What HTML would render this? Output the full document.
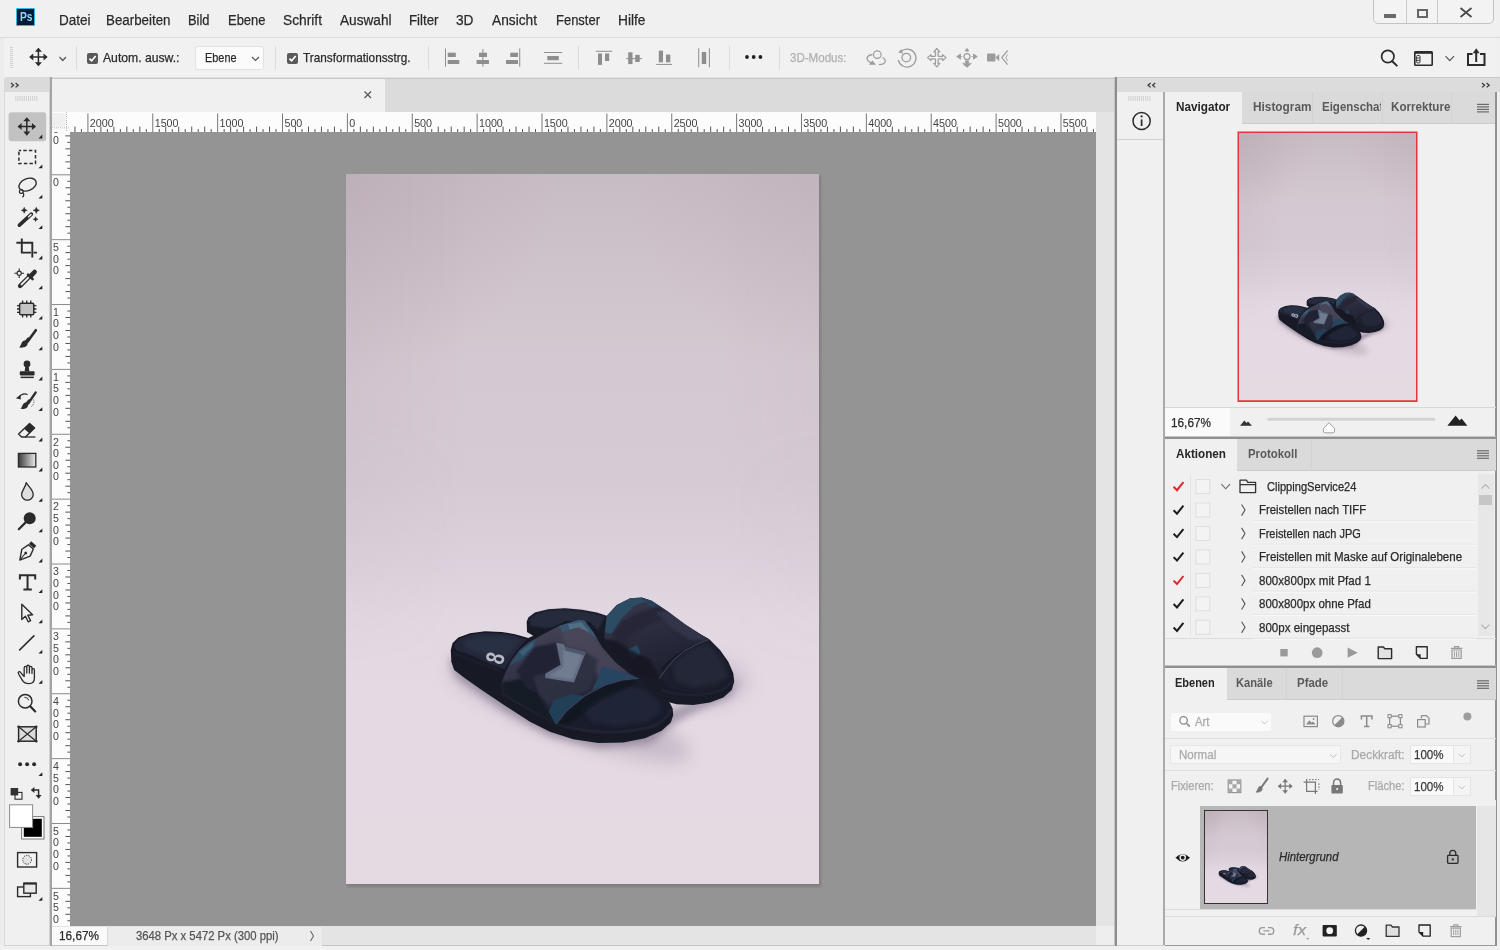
<!DOCTYPE html>
<html lang="de"><head><meta charset="utf-8"><title>Photoshop</title>
<style>
html,body{margin:0;padding:0}
body{width:1500px;height:950px;position:relative;overflow:hidden;background:#f0f0f0;font-family:"Liberation Sans",sans-serif;}
.b{position:absolute;display:block;box-sizing:border-box}
.t{position:absolute;white-space:nowrap;line-height:20px;display:block;transform-origin:0 50%;-webkit-text-stroke:0.25px currentColor}
svg{overflow:visible}
</style></head><body>
<div id="app" style="position:absolute;left:0;top:0;width:1500px;height:950px;will-change:transform">
<div class="b" style="left:0px;top:0px;width:1500px;height:37px;background:#f0f0f0;"></div>
<div class="b" style="left:0px;top:37px;width:1500px;height:1px;background:#dadada;"></div>
<div class="b" style="left:4px;top:38px;width:1494px;height:40px;background:#f1f1f1;"></div>
<div class="b" style="left:49px;top:77px;width:1068px;height:1px;background:#e2e2e2;"></div>
<div class="b" style="left:49px;top:78px;width:1068px;height:1px;background:#c6c6c6;"></div>
<div class="b" style="left:4px;top:79px;width:1px;height:871px;background:#d9d9d9;"></div>
<div class="b" style="left:4.5px;top:77px;width:45px;height:15px;background:#dadada;"></div>
<div class="b" style="left:5px;top:92px;width:45px;height:858px;background:#f0f0f0;"></div>
<div class="b" style="left:49px;top:77px;width:1px;height:873px;background:#d2d2d2;"></div>
<div class="b" style="left:50px;top:77px;width:2px;height:873px;background:#a4a4a4;"></div>
<div class="b" style="left:52px;top:79px;width:1064px;height:33px;background:#dbdbdb;"></div>
<div class="b" style="left:52px;top:79px;width:333px;height:33px;background:#f0f0f0;"></div>
<div class="b" style="left:52px;top:112px;width:1044px;height:20px;background:#fcfcfc;"></div>
<div class="b" style="left:52px;top:132px;width:18px;height:794px;background:#fcfcfc;"></div>
<div class="b" style="left:70px;top:132px;width:1026px;height:794px;background:#949494;"></div>
<div class="b" style="left:1096px;top:112px;width:20px;height:814px;background:#e4e4e4;"></div>
<div class="b" style="left:52px;top:926px;width:1064px;height:20px;background:#e4e4e4;"></div>
<div class="b" style="left:1096px;top:926px;width:20px;height:20px;background:#eeeeee;"></div>
<div class="b" style="left:0px;top:946px;width:1500px;height:4px;background:#f0f0f0;"></div>
<div class="b" style="left:52px;top:945.4px;width:1064px;height:1px;background:#c4c4c4;"></div>
<div class="b" style="left:0px;top:945px;width:50px;height:5px;background:#f0f0f0;"></div>
<div class="b" style="left:4px;top:945px;width:46px;height:1px;background:#d2d2d2;"></div>
<div class="b" style="left:0px;top:38px;width:3.5px;height:907px;background:#ececec;"></div>
<div class="b" style="left:1114px;top:77px;width:1px;height:869px;background:#c4c4c4;"></div>
<div class="b" style="left:1115px;top:77px;width:1.6px;height:869px;background:#8c8c8c;"></div>
<div class="b" style="left:1116.6px;top:77px;width:383.4px;height:1px;background:#c8c8c8;"></div>
<div class="b" style="left:1116.6px;top:78px;width:383.4px;height:14px;background:#dcdcdc;"></div>
<div class="b" style="left:1117px;top:92px;width:47px;height:47px;background:#f0f0f0;"></div>
<div class="b" style="left:1117px;top:139px;width:47px;height:1px;background:#cfcfcf;"></div>
<div class="b" style="left:1117px;top:140px;width:47px;height:806px;background:#f0f0f0;"></div>
<div class="b" style="left:1163px;top:92px;width:2px;height:854px;background:#aaaaaa;"></div>
<div class="b" style="left:1165px;top:92px;width:331px;height:854px;background:#f0f0f0;"></div>
<div class="b" style="left:16px;top:8px;width:19px;height:18px;background:#001d34;border:1.5px solid #2fb5ee;border-radius:1px;"></div>
<span id="pslogo" class="t" style="left:19.5px;top:6.60px;font-size:12px;color:#8fd4ff;font-weight:700;-webkit-text-stroke:0;transform:scaleX(0.8510);">Ps</span>
<span id="menu0" class="t" style="left:59px;top:9.80px;font-size:15.3px;color:#2a2a2a;transform:scaleX(0.8819);">Datei</span>
<span id="menu1" class="t" style="left:106px;top:9.80px;font-size:15.3px;color:#2a2a2a;transform:scaleX(0.8716);">Bearbeiten</span>
<span id="menu2" class="t" style="left:188px;top:9.80px;font-size:15.3px;color:#2a2a2a;transform:scaleX(0.8426);">Bild</span>
<span id="menu3" class="t" style="left:227.5px;top:9.80px;font-size:15.3px;color:#2a2a2a;transform:scaleX(0.8477);">Ebene</span>
<span id="menu4" class="t" style="left:282.5px;top:9.80px;font-size:15.3px;color:#2a2a2a;transform:scaleX(0.8994);">Schrift</span>
<span id="menu5" class="t" style="left:339.5px;top:9.80px;font-size:15.3px;color:#2a2a2a;transform:scaleX(0.8905);">Auswahl</span>
<span id="menu6" class="t" style="left:409px;top:9.80px;font-size:15.3px;color:#2a2a2a;transform:scaleX(0.8677);">Filter</span>
<span id="menu7" class="t" style="left:456px;top:9.80px;font-size:15.3px;color:#2a2a2a;transform:scaleX(0.8945);">3D</span>
<span id="menu8" class="t" style="left:491.5px;top:9.80px;font-size:15.3px;color:#2a2a2a;transform:scaleX(0.8969);">Ansicht</span>
<span id="menu9" class="t" style="left:556px;top:9.80px;font-size:15.3px;color:#2a2a2a;transform:scaleX(0.8485);">Fenster</span>
<span id="menu10" class="t" style="left:618px;top:9.80px;font-size:15.3px;color:#2a2a2a;transform:scaleX(0.8984);">Hilfe</span>
<div class="b" style="left:1373px;top:-2px;width:121px;height:26px;border:1px solid #c4c4c4;border-radius:0 0 5px 5px;background:#f3f3f3"></div>
<div class="b" style="left:1406px;top:0px;width:1px;height:23px;background:#c8c8c8;"></div>
<div class="b" style="left:1437px;top:0px;width:1px;height:23px;background:#c8c8c8;"></div>
<div class="b" style="left:1384px;top:14px;width:12px;height:4px;background:#6a6a6a;"></div>
<div class="b" style="left:1417px;top:9px;width:11px;height:9px;border:2px solid #666;border-top-width:2px"></div>
<svg class="b" style="left:1459px;top:7px;" width="14" height="11" viewBox="0 0 14 11"><path d="M1.5 1 L12.5 10 M12.5 1 L1.5 10" stroke="#4a4a4a" stroke-width="1.8" fill="none"/></svg>
<div class="b" style="left:10px;top:47px;width:3px;height:1px;background:#cfcfcf;"></div>
<div class="b" style="left:10px;top:49px;width:3px;height:1px;background:#cfcfcf;"></div>
<div class="b" style="left:10px;top:51px;width:3px;height:1px;background:#cfcfcf;"></div>
<div class="b" style="left:10px;top:53px;width:3px;height:1px;background:#cfcfcf;"></div>
<div class="b" style="left:10px;top:55px;width:3px;height:1px;background:#cfcfcf;"></div>
<div class="b" style="left:10px;top:57px;width:3px;height:1px;background:#cfcfcf;"></div>
<div class="b" style="left:10px;top:59px;width:3px;height:1px;background:#cfcfcf;"></div>
<div class="b" style="left:10px;top:61px;width:3px;height:1px;background:#cfcfcf;"></div>
<div class="b" style="left:10px;top:63px;width:3px;height:1px;background:#cfcfcf;"></div>
<div class="b" style="left:10px;top:65px;width:3px;height:1px;background:#cfcfcf;"></div>
<div class="b" style="left:10px;top:67px;width:3px;height:1px;background:#cfcfcf;"></div>
<svg class="b" style="left:0px;top:0px;pointer-events:none" width="1500" height="950" viewBox="0 0 1500 950"><g transform="translate(38.4 57)"><path d="M-8.25 0 H8.25 M0 -8.25 V8.25" stroke="#2b2b2b" stroke-width="1.5" fill="none"/><path d="M0 -9.25 L3.515 -5.135 H-3.515 Z M0 9.25 L3.515 5.135 H-3.515 Z M-9.25 0 L-5.135 -3.515 V3.515 Z M9.25 0 L5.135 -3.515 V3.515 Z" fill="#2b2b2b"/></g></svg>
<svg class="b" style="left:0px;top:0px;pointer-events:none" width="1500" height="950" viewBox="0 0 1500 950"><path d="M59.5 57 l3.25 3.5 l3.25 -3.5" stroke="#555" stroke-width="1.2" fill="none"/></svg>
<div class="b" style="left:76px;top:46px;width:1px;height:24px;background:#dcdcdc;"></div>
<div class="b" style="left:274.5px;top:46px;width:1px;height:24px;background:#dcdcdc;"></div>
<div class="b" style="left:428px;top:46px;width:1px;height:24px;background:#dcdcdc;"></div>
<div class="b" style="left:578px;top:46px;width:1px;height:24px;background:#dcdcdc;"></div>
<div class="b" style="left:729px;top:46px;width:1px;height:24px;background:#dcdcdc;"></div>
<div class="b" style="left:779px;top:46px;width:1px;height:24px;background:#dcdcdc;"></div>
<svg class="b" style="left:86.5px;top:52.5px" width="11" height="11" viewBox="0 0 11 11"><rect x="0" y="0" width="11" height="11" rx="2" fill="#5a5a5a"/><path d="M2.4 5.6 L4.6 7.8 L8.7 3" stroke="#fff" stroke-width="1.7" fill="none"/></svg>
<span id="opt1" class="t" style="left:102.5px;top:48.10px;font-size:13px;color:#2a2a2a;transform:scaleX(0.9368);">Autom. ausw.:</span>
<div class="b" style="left:195px;top:46px;width:69px;height:24px;background:#fbfbfb;border:1px solid #e2e2e2;border-radius:3px"></div>
<span id="opt2" class="t" style="left:205px;top:48.40px;font-size:13px;color:#2a2a2a;transform:scaleX(0.8379);">Ebene</span>
<svg class="b" style="left:0px;top:0px;pointer-events:none" width="1500" height="950" viewBox="0 0 1500 950"><path d="M252 57 l3.5 3.5 l3.5 -3.5" stroke="#555" stroke-width="1.2" fill="none"/></svg>
<svg class="b" style="left:286.5px;top:52.5px" width="11" height="11" viewBox="0 0 11 11"><rect x="0" y="0" width="11" height="11" rx="2" fill="#5a5a5a"/><path d="M2.4 5.6 L4.6 7.8 L8.7 3" stroke="#fff" stroke-width="1.7" fill="none"/></svg>
<span id="opt3" class="t" style="left:303px;top:48.10px;font-size:13px;color:#2a2a2a;transform:scaleX(0.9054);">Transformationsstrg.</span>
<span id="opt4" class="t" style="left:790px;top:48.10px;font-size:13px;color:#b0b0b0;transform:scaleX(0.8886);">3D-Modus:</span>
<svg class="b" style="left:744px;top:54px;" width="20" height="6" viewBox="0 0 20 6"><circle cx="3" cy="3" r="1.9" fill="#222"/><circle cx="9.7" cy="3" r="1.9" fill="#222"/><circle cx="16.4" cy="3" r="1.9" fill="#222"/></svg>
<svg class="b" style="left:0px;top:0px;pointer-events:none" width="1500" height="950" viewBox="0 0 1500 950"><rect x="445" y="48.5" width="1.00" height="18.20" fill="#8e8e8e"/><rect x="447.7" y="52.7" width="8.10" height="4.30" fill="#8e8e8e"/><rect x="447.7" y="60" width="11.60" height="4.00" fill="#8e8e8e"/><rect x="482.4" y="49" width="1.00" height="17.70" fill="#8e8e8e"/><rect x="479" y="52.7" width="8.00" height="4.30" fill="#8e8e8e"/><rect x="476.6" y="60" width="12.40" height="4.00" fill="#8e8e8e"/><rect x="519.2" y="48.5" width="1.00" height="18.20" fill="#8e8e8e"/><rect x="510.2" y="52.7" width="7.80" height="4.30" fill="#8e8e8e"/><rect x="506" y="60" width="12.00" height="4.00" fill="#8e8e8e"/><rect x="544" y="52" width="18.20" height="1.00" fill="#8e8e8e"/><rect x="544" y="62.8" width="18.20" height="1.00" fill="#8e8e8e"/><rect x="547.3" y="56" width="11.50" height="4.20" fill="#8e8e8e"/><rect x="595.8" y="50.8" width="16.30" height="1.00" fill="#8e8e8e"/><rect x="598" y="53.5" width="4.00" height="11.40" fill="#8e8e8e"/><rect x="605" y="53.5" width="4.20" height="7.50" fill="#8e8e8e"/><rect x="626" y="58.1" width="16.00" height="1.00" fill="#8e8e8e"/><rect x="628.2" y="52.3" width="4.30" height="11.80" fill="#8e8e8e"/><rect x="635.2" y="54.9" width="4.50" height="7.10" fill="#8e8e8e"/><rect x="656.2" y="63.9" width="15.80" height="1.00" fill="#8e8e8e"/><rect x="658.8" y="50.7" width="4.20" height="11.60" fill="#8e8e8e"/><rect x="666" y="54.6" width="4.30" height="7.70" fill="#8e8e8e"/><rect x="698.2" y="48.3" width="1.00" height="18.90" fill="#8e8e8e"/><rect x="708.9" y="48.3" width="1.00" height="18.90" fill="#8e8e8e"/><rect x="701.8" y="52" width="4.40" height="12.00" fill="#8e8e8e"/></svg>
<svg class="b" style="left:0px;top:0px;pointer-events:none" width="1500" height="950" viewBox="0 0 1500 950"><circle cx="877.3" cy="54.6" r="3.8" fill="none" stroke="#9c9c9c" stroke-width="1.2"/><path d="M872.5 54.5 C866 55.5 865 60 871 62.8 M879 64.6 C886 64.5 887 60 882.5 57.5" fill="none" stroke="#9c9c9c" stroke-width="1.3"/><path d="M868.8 64.8 L876 64.8 L872.4 60.6 Z" fill="#9c9c9c"/><path d="M900.8 51.5 A9 9 0 1 1 898.2 60" fill="none" stroke="#9c9c9c" stroke-width="1.3"/><circle cx="906.3" cy="57.6" r="4.3" fill="none" stroke="#9c9c9c" stroke-width="1.3"/><path d="M898.2 52.6 L903.2 53.6 L901.2 49.2 Z" fill="#9c9c9c"/><path transform="rotate(0 936.8 57.6)" d="M935.5 56.300000000000004 V51.800000000000004 H933.8 L936.8 48.400000000000006 L939.8 51.800000000000004 H938.0999999999999 V56.300000000000004" fill="none" stroke="#9c9c9c" stroke-width="1.2" stroke-linejoin="round"/><path transform="rotate(90 936.8 57.6)" d="M935.5 56.300000000000004 V51.800000000000004 H933.8 L936.8 48.400000000000006 L939.8 51.800000000000004 H938.0999999999999 V56.300000000000004" fill="none" stroke="#9c9c9c" stroke-width="1.2" stroke-linejoin="round"/><path transform="rotate(180 936.8 57.6)" d="M935.5 56.300000000000004 V51.800000000000004 H933.8 L936.8 48.400000000000006 L939.8 51.800000000000004 H938.0999999999999 V56.300000000000004" fill="none" stroke="#9c9c9c" stroke-width="1.2" stroke-linejoin="round"/><path transform="rotate(270 936.8 57.6)" d="M935.5 56.300000000000004 V51.800000000000004 H933.8 L936.8 48.400000000000006 L939.8 51.800000000000004 H938.0999999999999 V56.300000000000004" fill="none" stroke="#9c9c9c" stroke-width="1.2" stroke-linejoin="round"/><circle cx="967" cy="56.6" r="3" fill="none" stroke="#9c9c9c" stroke-width="1.2"/><path d="M962.5 56.6 h-2 v-2.6 l-3.8 2.6 l3.8 2.6 v-2.6 M971.5 56.6 h2 v-2.6 l3.8 2.6 l-3.8 2.6 v-2.6" fill="#9c9c9c" stroke="#9c9c9c" stroke-width="0.8"/><path d="M967 52.1 v-1 h-2 l2 -2.8 l2 2.8 h-2 M965.4 60.800000000000004 h3.2 v2.6 h2.8 l-4.4 4 l-4.4 -4 h2.8 Z" fill="#9c9c9c" stroke="#9c9c9c" stroke-width="0.6"/><rect x="987" y="53.6" width="8.4" height="8" rx="1" fill="#9c9c9c"/><path d="M995.4 57.6 L999.2 54 V61.2 Z" fill="#9c9c9c"/><path d="M1007.6 50.5 L1001.8 57.6 L1007.6 64.7" fill="none" stroke="#9c9c9c" stroke-width="1.2"/><path d="M1007.4 54.5 Q1004.5 57.6 1007.4 60.8" fill="none" stroke="#9c9c9c" stroke-width="0.9"/></svg>
<svg class="b" style="left:0px;top:0px;pointer-events:none" width="1500" height="950" viewBox="0 0 1500 950"><circle cx="1387.8" cy="56.5" r="6.2" fill="none" stroke="#2b2b2b" stroke-width="1.7"/><path d="M1392.2 61.2 L1396.8 65.6" stroke="#2b2b2b" stroke-width="2" stroke-linecap="round"/><rect x="1414.8" y="51.8" width="17.4" height="13.4" rx="0.8" fill="none" stroke="#2b2b2b" stroke-width="1.6"/><path d="M1414.8 52.6 H1432.2" stroke="#2b2b2b" stroke-width="2.4"/><rect x="1416.6" y="55.5" width="3.4" height="7.4" rx="1" fill="none" stroke="#2b2b2b" stroke-width="0.9"/><path d="M1416.6 58 h3.4 M1416.6 60.4 h3.4" stroke="#2b2b2b" stroke-width="0.8"/><path d="M1445.5 56.2 l4.25 4.4 l4.25 -4.4" stroke="#555" stroke-width="1.2" fill="none"/><path d="M1472.5 54 H1468 V65 H1484.5 V54 H1480" fill="none" stroke="#2b2b2b" stroke-width="2"/><path d="M1476.2 62 V50.5" stroke="#2b2b2b" stroke-width="2"/><path d="M1472.8 53.2 L1476.2 48.2 L1479.6 53.2 Z" fill="#2b2b2b"/></svg>
<svg class="b" style="left:0px;top:0px;pointer-events:none" width="1500" height="950" viewBox="0 0 1500 950"><path d="M11 83 l2.6 2.2 l-2.6 2.2 M15.6 83 l2.6 2.2 l-2.6 2.2" fill="none" stroke="#333" stroke-width="1.2"/><rect x="15.4" y="96" width="0.9" height="5" fill="#cdcdcd"/><rect x="17.5" y="96" width="0.9" height="5" fill="#cdcdcd"/><rect x="19.6" y="96" width="0.9" height="5" fill="#cdcdcd"/><rect x="21.7" y="96" width="0.9" height="5" fill="#cdcdcd"/><rect x="23.8" y="96" width="0.9" height="5" fill="#cdcdcd"/><rect x="25.9" y="96" width="0.9" height="5" fill="#cdcdcd"/><rect x="28.0" y="96" width="0.9" height="5" fill="#cdcdcd"/><rect x="30.1" y="96" width="0.9" height="5" fill="#cdcdcd"/><rect x="32.2" y="96" width="0.9" height="5" fill="#cdcdcd"/><rect x="34.3" y="96" width="0.9" height="5" fill="#cdcdcd"/><rect x="36.4" y="96" width="0.9" height="5" fill="#cdcdcd"/><rect x="8.6" y="112.2" width="37.6" height="29" rx="3" fill="#c2c2c2"/><g transform="translate(26.8 126.4)"><path d="M-8.25 0 H8.25 M0 -8.25 V8.25" stroke="#2b2b2b" stroke-width="1.5" fill="none"/><path d="M0 -9.25 L3.515 -5.135 H-3.515 Z M0 9.25 L3.515 5.135 H-3.515 Z M-9.25 0 L-5.135 -3.515 V3.515 Z M9.25 0 L5.135 -3.515 V3.515 Z" fill="#2b2b2b"/></g><path d="M42.3 134.6 V138.4 H38.5 Z" fill="#222"/><rect x="18.9" y="150.4" width="16.6" height="13.2" fill="none" stroke="#2b2b2b" stroke-width="1.5" stroke-dasharray="3.4 2.2" stroke-dashoffset="1.2"/><path d="M42.3 164.5 V168.3 H38.5 Z" fill="#222"/><ellipse cx="27.6" cy="184.6" rx="9" ry="6" transform="rotate(-22 27.6 184.6)" fill="none" stroke="#2b2b2b" stroke-width="1.4"/><circle cx="21.3" cy="191.4" r="1.9" fill="none" stroke="#2b2b2b" stroke-width="1.2"/><path d="M22.8 192.6 Q24.8 194.6 22.6 197.4" fill="none" stroke="#2b2b2b" stroke-width="1.2"/><path d="M42.3 194.8 V198.60000000000002 H38.5 Z" fill="#222"/><path d="M19.4 225.2 L31.4 214.2" stroke="#2b2b2b" stroke-width="3.6" stroke-linecap="round"/><path d="M28.6 216.8 L31 214.6" stroke="#f0f0f0" stroke-width="1.5" stroke-linecap="round"/><path d="M24.2 207.3 L25.10 209.40 L27.2 210.3 L25.10 211.20 L24.2 213.3 L23.30 211.20 L21.2 210.3 L23.30 209.40 Z" fill="#2b2b2b" stroke="#2b2b2b" stroke-width="0.5" stroke-linejoin="round"/><path d="M36.3 207.20000000000002 L37.23 209.37 L39.4 210.3 L37.23 211.23 L36.3 213.4 L35.37 211.23 L33.199999999999996 210.3 L35.37 209.37 Z" fill="#2b2b2b" stroke="#2b2b2b" stroke-width="0.5" stroke-linejoin="round"/><path d="M35.6 216.79999999999998 L36.32 218.48 L38.0 219.2 L36.32 219.92 L35.6 221.6 L34.88 219.92 L33.2 219.2 L34.88 218.48 Z" fill="#2b2b2b" stroke="#2b2b2b" stroke-width="0.5" stroke-linejoin="round"/><path d="M42.3 225.2 V229.0 H38.5 Z" fill="#222"/><path d="M21.8 238.6 V252.6 H31 M33.6 252.6 H37 M16.4 242.8 H32.3 V257.4" fill="none" stroke="#2b2b2b" stroke-width="1.9"/><path d="M42.3 255.6 V259.4 H38.5 Z" fill="#222"/><path d="M29 277 L21.4 284.6 Q19.4 286.6 20.4 285.6" stroke="#2b2b2b" stroke-width="4.4" stroke-linecap="round"/><path d="M28.6 277.4 L21.6 284.4" stroke="#f0f0f0" stroke-width="2" stroke-linecap="round"/><path d="M28 274.6 L32.6 279.2" stroke="#2b2b2b" stroke-width="2.6" stroke-linecap="round"/><path d="M30.6 276.2 L34.6 272" stroke="#2b2b2b" stroke-width="4.6" stroke-linecap="round"/><circle cx="19.2" cy="273.2" r="2.1" fill="none" stroke="#2b2b2b" stroke-width="1.1"/><path d="M19.2 268.4 v2.7 M19.2 275.3 v2.7 M14.4 273.2 h2.7 M21.3 273.2 h2.7" stroke="#2b2b2b" stroke-width="1.1"/><path d="M42.3 285.4 V289.2 H38.5 Z" fill="#222"/><rect x="19.6" y="303.2" width="14.2" height="11.6" rx="1.6" fill="#c4c4c4" stroke="#2b2b2b" stroke-width="1.5"/><path d="M22.6 300.4 v2.6 M22.6 315 v2.6 M26.7 300.4 v2.6 M26.7 315 v2.6 M30.8 300.4 v2.6 M30.8 315 v2.6 M17 305.6 h2.6 M33.8 305.6 h2.6 M17 309 h2.6 M33.8 309 h2.6 M17 312.4 h2.6 M33.8 312.4 h2.6 " stroke="#2b2b2b" stroke-width="1.3"/><path d="M42.3 315.8 V319.6 H38.5 Z" fill="#222"/><path d="M35.8 330.2 L27.6 341.4" stroke="#2b2b2b" stroke-width="2.6" stroke-linecap="round"/><path d="M28.6 339 L25 343.4" stroke="#2b2b2b" stroke-width="3.4" stroke-linecap="round"/><path d="M25 340.6 C21.6 340.4 21.6 345 19.2 347.6 C24 348.2 28 346.6 27.6 342.8 Z" fill="#2b2b2b"/><path d="M42.3 346.4 V350.2 H38.5 Z" fill="#222"/><circle cx="27" cy="364" r="3.4" fill="#2b2b2b"/><path d="M25.4 366 L24.6 371.6 H29.4 L28.6 366 Z" fill="#2b2b2b"/><rect x="19.8" y="371.2" width="14.8" height="4.2" rx="0.8" fill="#2b2b2b"/><rect x="20.6" y="376.6" width="13.2" height="1.5" fill="#2b2b2b"/><path d="M42.3 376.6 V380.40000000000003 H38.5 Z" fill="#222"/><path d="M35.6 392.6 L28.4 403.2" stroke="#2b2b2b" stroke-width="2.4" stroke-linecap="round"/><path d="M29.2 401 L26 405" stroke="#2b2b2b" stroke-width="3.2" stroke-linecap="round"/><path d="M25.8 402.4 C22.6 402.4 22.8 406.4 20.4 408.8 C24.6 409.4 28.4 408 28 404.4 Z" fill="#2b2b2b"/><path d="M18.6 397.4 Q22.6 392.4 27.6 394.6" fill="none" stroke="#2b2b2b" stroke-width="1.1"/><path d="M15.8 398.2 L20.6 395 L20.8 399.4 Z" fill="#2b2b2b"/><path d="M33.6 399.6 Q35 403.6 30.6 407.4" fill="none" stroke="#2b2b2b" stroke-width="0.9" stroke-dasharray="1 1.2"/><path d="M42.3 407.2 V411.0 H38.5 Z" fill="#222"/><path d="M29.6 423.6 L34.6 428 L25.4 437 H21.6 L18.6 434 Z" fill="#f0f0f0" stroke="#2b2b2b" stroke-width="1.4" stroke-linejoin="round"/><path d="M29.6 423.6 L34.6 428 L29.2 433.2 L24.2 428.8 Z" fill="#2b2b2b"/><path d="M25 437 H35.4" stroke="#2b2b2b" stroke-width="1.3"/><path d="M42.3 437.6 V441.40000000000003 H38.5 Z" fill="#222"/><defs><linearGradient id="tg" x1="0" x2="1"><stop offset="0" stop-color="#3a3a3a"/><stop offset="1" stop-color="#ececec"/></linearGradient></defs><rect x="18.4" y="453.4" width="17.4" height="13.6" fill="url(#tg)" stroke="#2b2b2b" stroke-width="1.3"/><path d="M42.3 467.6 V471.40000000000003 H38.5 Z" fill="#222"/><path d="M26.2 482.6 C28.4 486.6 33.2 490 33.2 494.4 A5.8 5.8 0 0 1 21.6 494.4 C21.6 490.6 25.6 487.4 26.2 482.6 Z" fill="#dedede" stroke="#2b2b2b" stroke-width="1.3" stroke-linejoin="round"/><path d="M42.3 498 V501.8 H38.5 Z" fill="#222"/><circle cx="29.7" cy="518.2" r="6" fill="#2b2b2b"/><path d="M25.4 522.6 L18.8 529.2" stroke="#2b2b2b" stroke-width="2.2" stroke-linecap="round"/><path d="M42.3 528.4 V532.1999999999999 H38.5 Z" fill="#222"/><g transform="rotate(40 27.4 551)"><path d="M24 541.2 h6.8 v3.4 h-6.8 Z" fill="#2b2b2b"/><path d="M24.2 545.6 h6.4 l2.2 7.6 l-5.4 9.6 l-5.4 -9.6 Z" fill="#f0f0f0" stroke="#2b2b2b" stroke-width="1.4" stroke-linejoin="round"/><path d="M27.4 562 V554.6" stroke="#2b2b2b" stroke-width="1.1"/><circle cx="27.4" cy="553.6" r="1.4" fill="#2b2b2b"/></g><path d="M42.3 558.6 V562.4 H38.5 Z" fill="#222"/><path d="M19.9 579.6 V575.2 H35.2 V579.6 M27.55 575.2 V589.4 M23.4 589.4 H31.8" fill="none" stroke="#2b2b2b" stroke-width="2"/><path d="M42.3 589.2 V593.0 H38.5 Z" fill="#222"/><path d="M21.8 604.2 V619.6 L25.4 616.2 L28.2 621.8 L30.6 620.6 L27.8 615.2 L32.6 614.8 Z" fill="#f0f0f0" stroke="#2b2b2b" stroke-width="1.4" stroke-linejoin="round"/><path d="M42.3 619.4 V623.1999999999999 H38.5 Z" fill="#222"/><path d="M19.2 650.4 L34.4 635.4" stroke="#2b2b2b" stroke-width="1.5"/><path d="M42.3 649.8 V653.5999999999999 H38.5 Z" fill="#222"/><path d="M23.6 676 L20.6 672.4 C19.4 670.8 17.4 672 18.6 674 L22.4 680.4 C24 683 26 683.6 29 683.6 C32.4 683.6 34.4 681.4 34.4 678 V670 C34.4 668.2 32 668.2 32 670 V673.4 V667.8 C32 666 29.4 666 29.4 667.8 V673 V666.6 C29.4 664.8 26.8 664.8 26.8 666.6 V673 V667.8 C26.8 666 24.2 666 24.2 667.8 V676.6" fill="#f0f0f0" stroke="#2b2b2b" stroke-width="1.3" stroke-linejoin="round" stroke-linecap="round"/><path d="M42.3 680 V683.8 H38.5 Z" fill="#222"/><circle cx="25.2" cy="701.2" r="6.8" fill="none" stroke="#2b2b2b" stroke-width="1.5"/><path d="M30.2 706.2 L35.2 711.4" stroke="#2b2b2b" stroke-width="2.2" stroke-linecap="round"/><path d="M24.4 697.4 A4 4 0 0 1 28.8 700.4" fill="none" stroke="#2b2b2b" stroke-width="0.9"/><rect x="18.6" y="726.8" width="17.6" height="14.4" fill="#dcdcdc" stroke="#2b2b2b" stroke-width="1.5"/><path d="M18.6 726.8 L36.2 741.2 M36.2 726.8 L18.6 741.2" stroke="#2b2b2b" stroke-width="1.2"/><circle cx="18.6" cy="726.8" r="1.3" fill="#2b2b2b"/><circle cx="36.2" cy="726.8" r="1.3" fill="#2b2b2b"/><circle cx="18.6" cy="741.2" r="1.3" fill="#2b2b2b"/><circle cx="36.2" cy="741.2" r="1.3" fill="#2b2b2b"/><circle cx="20.1" cy="764.2" r="2" fill="#2b2b2b"/><circle cx="27.1" cy="764.2" r="2" fill="#2b2b2b"/><circle cx="34.1" cy="764.2" r="2" fill="#2b2b2b"/><path d="M42.3 772.2 V776.0 H38.5 Z" fill="#222"/><rect x="15" y="792.4" width="7" height="6.8" fill="#f4f4f4" stroke="#2b2b2b" stroke-width="1.1"/><rect x="10.6" y="788" width="7.6" height="7.4" fill="#333"/><path d="M33.4 790 H38.6 V796" fill="none" stroke="#2b2b2b" stroke-width="1.5"/><path d="M30.8 790 L34.4 787 V793 Z M38.6 798.8 L35.6 795 H41.6 Z" fill="#2b2b2b"/><rect x="21.6" y="816.6" width="22.4" height="22.4" fill="#fff" stroke="#777" stroke-width="1"/><rect x="23.8" y="818.8" width="18" height="18" fill="#000"/><rect x="9.6" y="804.8" width="23" height="22.6" fill="#fff" stroke="#8a8a8a" stroke-width="1"/><rect x="17.6" y="852.6" width="19" height="14.4" fill="#f4f4f4" stroke="#2b2b2b" stroke-width="1.4"/><circle cx="27.1" cy="859.8" r="4.4" fill="#e4e4e4" stroke="#2b2b2b" stroke-width="1" stroke-dasharray="1.3 1.1"/><rect x="17.6" y="887" width="12.8" height="9.6" fill="#f0f0f0" stroke="#2b2b2b" stroke-width="1.4"/><rect x="23.8" y="883.2" width="12.4" height="10" fill="#e8e8e8" stroke="#2b2b2b" stroke-width="1.4"/><path d="M23.8 883.6 h12.4" stroke="#2b2b2b" stroke-width="2"/><path d="M42.3 897 V900.8 H38.5 Z" fill="#222"/></svg>
<svg class="b" style="left:0px;top:0px;pointer-events:none;font-family:'Liberation Sans',sans-serif" width="1500" height="950" viewBox="0 0 1500 950"><rect x="52" y="113" width="13.6" height="14" fill="#efefef"/><path d="M66.5 112 V132 M52 127.8 H70" stroke="#bdbdbd" stroke-width="1" stroke-dasharray="1 1"/><clipPath id="rcx"><rect x="70" y="112" width="1026" height="20"/></clipPath><g clip-path="url(#rcx)"><text x="89.82" y="126.8" font-size="10.6" fill="#444" textLength="23.8" lengthAdjust="spacingAndGlyphs">2000</text><text x="154.69" y="126.8" font-size="10.6" fill="#444" textLength="23.8" lengthAdjust="spacingAndGlyphs">1500</text><text x="219.56" y="126.8" font-size="10.6" fill="#444" textLength="23.8" lengthAdjust="spacingAndGlyphs">1000</text><text x="284.43" y="126.8" font-size="10.6" fill="#444" textLength="17.9" lengthAdjust="spacingAndGlyphs">500</text><text x="349.30" y="126.8" font-size="10.6" fill="#444" textLength="6.0" lengthAdjust="spacingAndGlyphs">0</text><text x="414.17" y="126.8" font-size="10.6" fill="#444" textLength="17.9" lengthAdjust="spacingAndGlyphs">500</text><text x="479.04" y="126.8" font-size="10.6" fill="#444" textLength="23.8" lengthAdjust="spacingAndGlyphs">1000</text><text x="543.91" y="126.8" font-size="10.6" fill="#444" textLength="23.8" lengthAdjust="spacingAndGlyphs">1500</text><text x="608.78" y="126.8" font-size="10.6" fill="#444" textLength="23.8" lengthAdjust="spacingAndGlyphs">2000</text><text x="673.65" y="126.8" font-size="10.6" fill="#444" textLength="23.8" lengthAdjust="spacingAndGlyphs">2500</text><text x="738.52" y="126.8" font-size="10.6" fill="#444" textLength="23.8" lengthAdjust="spacingAndGlyphs">3000</text><text x="803.39" y="126.8" font-size="10.6" fill="#444" textLength="23.8" lengthAdjust="spacingAndGlyphs">3500</text><text x="868.26" y="126.8" font-size="10.6" fill="#444" textLength="23.8" lengthAdjust="spacingAndGlyphs">4000</text><text x="933.13" y="126.8" font-size="10.6" fill="#444" textLength="23.8" lengthAdjust="spacingAndGlyphs">4500</text><text x="998.00" y="126.8" font-size="10.6" fill="#444" textLength="23.8" lengthAdjust="spacingAndGlyphs">5000</text><text x="1062.87" y="126.8" font-size="10.6" fill="#444" textLength="23.8" lengthAdjust="spacingAndGlyphs">5500</text><path d="M87.92 113.5 V132 M152.79 113.5 V132 M217.66 113.5 V132 M282.53 113.5 V132 M347.40 113.5 V132 M412.27 113.5 V132 M477.14 113.5 V132 M542.01 113.5 V132 M606.88 113.5 V132 M671.75 113.5 V132 M736.62 113.5 V132 M801.49 113.5 V132 M866.36 113.5 V132 M931.23 113.5 V132 M996.10 113.5 V132 M1060.97 113.5 V132 " stroke="#777" stroke-width="1"/><path d="M74.95 126.6 V132 M100.89 126.6 V132 M113.87 126.6 V132 M126.84 126.6 V132 M139.82 126.6 V132 M165.76 126.6 V132 M178.74 126.6 V132 M191.71 126.6 V132 M204.69 126.6 V132 M230.63 126.6 V132 M243.61 126.6 V132 M256.58 126.6 V132 M269.56 126.6 V132 M295.50 126.6 V132 M308.48 126.6 V132 M321.45 126.6 V132 M334.43 126.6 V132 M360.37 126.6 V132 M373.35 126.6 V132 M386.32 126.6 V132 M399.30 126.6 V132 M425.24 126.6 V132 M438.22 126.6 V132 M451.19 126.6 V132 M464.17 126.6 V132 M490.11 126.6 V132 M503.09 126.6 V132 M516.06 126.6 V132 M529.04 126.6 V132 M554.98 126.6 V132 M567.96 126.6 V132 M580.93 126.6 V132 M593.91 126.6 V132 M619.85 126.6 V132 M632.83 126.6 V132 M645.80 126.6 V132 M658.78 126.6 V132 M684.72 126.6 V132 M697.70 126.6 V132 M710.67 126.6 V132 M723.65 126.6 V132 M749.59 126.6 V132 M762.57 126.6 V132 M775.54 126.6 V132 M788.52 126.6 V132 M814.46 126.6 V132 M827.44 126.6 V132 M840.41 126.6 V132 M853.39 126.6 V132 M879.33 126.6 V132 M892.31 126.6 V132 M905.28 126.6 V132 M918.26 126.6 V132 M944.20 126.6 V132 M957.18 126.6 V132 M970.15 126.6 V132 M983.13 126.6 V132 M1009.07 126.6 V132 M1022.05 126.6 V132 M1035.02 126.6 V132 M1048.00 126.6 V132 M1073.94 126.6 V132 M1086.92 126.6 V132 M1099.89 126.6 V132 M68.46 129 V132 M81.43 129 V132 M94.41 129 V132 M107.38 129 V132 M120.35 129 V132 M133.33 129 V132 M146.30 129 V132 M159.28 129 V132 M172.25 129 V132 M185.22 129 V132 M198.20 129 V132 M211.17 129 V132 M224.15 129 V132 M237.12 129 V132 M250.09 129 V132 M263.07 129 V132 M276.04 129 V132 M289.02 129 V132 M301.99 129 V132 M314.96 129 V132 M327.94 129 V132 M340.91 129 V132 M353.89 129 V132 M366.86 129 V132 M379.83 129 V132 M392.81 129 V132 M405.78 129 V132 M418.76 129 V132 M431.73 129 V132 M444.70 129 V132 M457.68 129 V132 M470.65 129 V132 M483.63 129 V132 M496.60 129 V132 M509.57 129 V132 M522.55 129 V132 M535.52 129 V132 M548.50 129 V132 M561.47 129 V132 M574.44 129 V132 M587.42 129 V132 M600.39 129 V132 M613.37 129 V132 M626.34 129 V132 M639.32 129 V132 M652.29 129 V132 M665.26 129 V132 M678.24 129 V132 M691.21 129 V132 M704.18 129 V132 M717.16 129 V132 M730.13 129 V132 M743.11 129 V132 M756.08 129 V132 M769.06 129 V132 M782.03 129 V132 M795.00 129 V132 M807.98 129 V132 M820.95 129 V132 M833.92 129 V132 M846.90 129 V132 M859.87 129 V132 M872.85 129 V132 M885.82 129 V132 M898.79 129 V132 M911.77 129 V132 M924.74 129 V132 M937.72 129 V132 M950.69 129 V132 M963.66 129 V132 M976.64 129 V132 M989.61 129 V132 M1002.59 129 V132 M1015.56 129 V132 M1028.53 129 V132 M1041.51 129 V132 M1054.48 129 V132 M1067.46 129 V132 M1080.43 129 V132 M1093.40 129 V132 " stroke="#555" stroke-width="1"/></g><clipPath id="rcy"><rect x="52" y="132" width="18" height="794"/></clipPath><g clip-path="url(#rcy)"><text x="53" y="121.23" font-size="10.6" fill="#444">5</text><text x="53" y="132.83" font-size="10.6" fill="#444">0</text><text x="53" y="144.43" font-size="10.6" fill="#444">0</text><text x="53" y="186.10" font-size="10.6" fill="#444">0</text><text x="53" y="250.97" font-size="10.6" fill="#444">5</text><text x="53" y="262.57" font-size="10.6" fill="#444">0</text><text x="53" y="274.17" font-size="10.6" fill="#444">0</text><text x="53" y="315.84" font-size="10.6" fill="#444">1</text><text x="53" y="327.44" font-size="10.6" fill="#444">0</text><text x="53" y="339.04" font-size="10.6" fill="#444">0</text><text x="53" y="350.64" font-size="10.6" fill="#444">0</text><text x="53" y="380.71" font-size="10.6" fill="#444">1</text><text x="53" y="392.31" font-size="10.6" fill="#444">5</text><text x="53" y="403.91" font-size="10.6" fill="#444">0</text><text x="53" y="415.51" font-size="10.6" fill="#444">0</text><text x="53" y="445.58" font-size="10.6" fill="#444">2</text><text x="53" y="457.18" font-size="10.6" fill="#444">0</text><text x="53" y="468.78" font-size="10.6" fill="#444">0</text><text x="53" y="480.38" font-size="10.6" fill="#444">0</text><text x="53" y="510.45" font-size="10.6" fill="#444">2</text><text x="53" y="522.05" font-size="10.6" fill="#444">5</text><text x="53" y="533.65" font-size="10.6" fill="#444">0</text><text x="53" y="545.25" font-size="10.6" fill="#444">0</text><text x="53" y="575.32" font-size="10.6" fill="#444">3</text><text x="53" y="586.92" font-size="10.6" fill="#444">0</text><text x="53" y="598.52" font-size="10.6" fill="#444">0</text><text x="53" y="610.12" font-size="10.6" fill="#444">0</text><text x="53" y="640.19" font-size="10.6" fill="#444">3</text><text x="53" y="651.79" font-size="10.6" fill="#444">5</text><text x="53" y="663.39" font-size="10.6" fill="#444">0</text><text x="53" y="674.99" font-size="10.6" fill="#444">0</text><text x="53" y="705.06" font-size="10.6" fill="#444">4</text><text x="53" y="716.66" font-size="10.6" fill="#444">0</text><text x="53" y="728.26" font-size="10.6" fill="#444">0</text><text x="53" y="739.86" font-size="10.6" fill="#444">0</text><text x="53" y="769.93" font-size="10.6" fill="#444">4</text><text x="53" y="781.53" font-size="10.6" fill="#444">5</text><text x="53" y="793.13" font-size="10.6" fill="#444">0</text><text x="53" y="804.73" font-size="10.6" fill="#444">0</text><text x="53" y="834.80" font-size="10.6" fill="#444">5</text><text x="53" y="846.40" font-size="10.6" fill="#444">0</text><text x="53" y="858.00" font-size="10.6" fill="#444">0</text><text x="53" y="869.60" font-size="10.6" fill="#444">0</text><text x="53" y="899.67" font-size="10.6" fill="#444">5</text><text x="53" y="911.27" font-size="10.6" fill="#444">5</text><text x="53" y="922.87" font-size="10.6" fill="#444">0</text><text x="53" y="934.47" font-size="10.6" fill="#444">0</text><path d="M52 109.93 H70 M52 174.80 H70 M52 239.67 H70 M52 304.54 H70 M52 369.41 H70 M52 434.28 H70 M52 499.15 H70 M52 564.02 H70 M52 628.89 H70 M52 693.76 H70 M52 758.63 H70 M52 823.50 H70 M52 888.37 H70 " stroke="#8a8a8a" stroke-width="1"/><path d="M65.4 58.03 H70 M65.4 71.01 H70 M65.4 83.98 H70 M65.4 96.96 H70 M65.4 122.90 H70 M65.4 135.88 H70 M65.4 148.85 H70 M65.4 161.83 H70 M65.4 187.77 H70 M65.4 200.75 H70 M65.4 213.72 H70 M65.4 226.70 H70 M65.4 252.64 H70 M65.4 265.62 H70 M65.4 278.59 H70 M65.4 291.57 H70 M65.4 317.51 H70 M65.4 330.49 H70 M65.4 343.46 H70 M65.4 356.44 H70 M65.4 382.38 H70 M65.4 395.36 H70 M65.4 408.33 H70 M65.4 421.31 H70 M65.4 447.25 H70 M65.4 460.23 H70 M65.4 473.20 H70 M65.4 486.18 H70 M65.4 512.12 H70 M65.4 525.10 H70 M65.4 538.07 H70 M65.4 551.05 H70 M65.4 576.99 H70 M65.4 589.97 H70 M65.4 602.94 H70 M65.4 615.92 H70 M65.4 641.86 H70 M65.4 654.84 H70 M65.4 667.81 H70 M65.4 680.79 H70 M65.4 706.73 H70 M65.4 719.71 H70 M65.4 732.68 H70 M65.4 745.66 H70 M65.4 771.60 H70 M65.4 784.58 H70 M65.4 797.55 H70 M65.4 810.53 H70 M65.4 836.47 H70 M65.4 849.45 H70 M65.4 862.42 H70 M65.4 875.40 H70 M65.4 901.34 H70 M65.4 914.32 H70 M65.4 927.29 H70 M67.4 51.55 H70 M67.4 64.52 H70 M67.4 77.50 H70 M67.4 90.47 H70 M67.4 103.44 H70 M67.4 116.42 H70 M67.4 129.39 H70 M67.4 142.37 H70 M67.4 155.34 H70 M67.4 168.31 H70 M67.4 181.29 H70 M67.4 194.26 H70 M67.4 207.24 H70 M67.4 220.21 H70 M67.4 233.18 H70 M67.4 246.16 H70 M67.4 259.13 H70 M67.4 272.11 H70 M67.4 285.08 H70 M67.4 298.05 H70 M67.4 311.03 H70 M67.4 324.00 H70 M67.4 336.98 H70 M67.4 349.95 H70 M67.4 362.92 H70 M67.4 375.90 H70 M67.4 388.87 H70 M67.4 401.85 H70 M67.4 414.82 H70 M67.4 427.79 H70 M67.4 440.77 H70 M67.4 453.74 H70 M67.4 466.72 H70 M67.4 479.69 H70 M67.4 492.66 H70 M67.4 505.64 H70 M67.4 518.61 H70 M67.4 531.59 H70 M67.4 544.56 H70 M67.4 557.53 H70 M67.4 570.51 H70 M67.4 583.48 H70 M67.4 596.46 H70 M67.4 609.43 H70 M67.4 622.40 H70 M67.4 635.38 H70 M67.4 648.35 H70 M67.4 661.33 H70 M67.4 674.30 H70 M67.4 687.27 H70 M67.4 700.25 H70 M67.4 713.22 H70 M67.4 726.19 H70 M67.4 739.17 H70 M67.4 752.14 H70 M67.4 765.12 H70 M67.4 778.09 H70 M67.4 791.07 H70 M67.4 804.04 H70 M67.4 817.01 H70 M67.4 829.99 H70 M67.4 842.96 H70 M67.4 855.93 H70 M67.4 868.91 H70 M67.4 881.88 H70 M67.4 894.86 H70 M67.4 907.83 H70 M67.4 920.81 H70 " stroke="#555" stroke-width="1"/></g></svg>
<svg class="b" style="left:363px;top:90px;" width="10" height="10" viewBox="0 0 10 10"><path d="M1.5 1.5 L8 8 M8 1.5 L1.5 8" stroke="#555" stroke-width="1.2"/></svg>
<div class="b" style="left:52px;top:926.6px;width:54.6px;height:18.8px;background:#fafafa;"></div>
<div class="b" style="left:106.6px;top:926.6px;width:1px;height:19.4px;background:#d8d8d8;"></div>
<div class="b" style="left:107.6px;top:926.6px;width:214.4px;height:19.4px;background:#ececec;"></div>
<span id="st1" class="t" style="left:58.5px;top:926.00px;font-size:12.5px;color:#2a2a2a;transform:scaleX(0.9432);">16,67%</span>
<span id="st2" class="t" style="left:135.5px;top:926.00px;font-size:12px;color:#555;transform:scaleX(0.9410);">3648 Px x 5472 Px (300 ppi)</span>
<svg class="b" style="left:308px;top:930px;" width="8" height="12" viewBox="0 0 8 12"><path d="M2.5 1 L5.5 6 L2.5 11" stroke="#666" stroke-width="1.1" fill="none"/></svg>
<svg class="b" style="left:0px;top:0px;pointer-events:none" width="1500" height="950" viewBox="0 0 1500 950"><path d="M1150.6 83 l-2.6 2.2 l2.6 2.2 M1155.2 83 l-2.6 2.2 l2.6 2.2" fill="none" stroke="#333" stroke-width="1.2"/><path d="M1482 83 l2.6 2.2 l-2.6 2.2 M1486.6 83 l2.6 2.2 l-2.6 2.2" fill="none" stroke="#333" stroke-width="1.2"/><rect x="1128.4" y="96" width="0.9" height="5" fill="#cdcdcd"/><rect x="1130.5" y="96" width="0.9" height="5" fill="#cdcdcd"/><rect x="1132.6" y="96" width="0.9" height="5" fill="#cdcdcd"/><rect x="1134.7" y="96" width="0.9" height="5" fill="#cdcdcd"/><rect x="1136.8" y="96" width="0.9" height="5" fill="#cdcdcd"/><rect x="1138.9" y="96" width="0.9" height="5" fill="#cdcdcd"/><rect x="1141.0" y="96" width="0.9" height="5" fill="#cdcdcd"/><rect x="1143.1" y="96" width="0.9" height="5" fill="#cdcdcd"/><rect x="1145.2" y="96" width="0.9" height="5" fill="#cdcdcd"/><rect x="1147.3" y="96" width="0.9" height="5" fill="#cdcdcd"/><rect x="1149.4" y="96" width="0.9" height="5" fill="#cdcdcd"/><circle cx="1141.6" cy="121" r="8.6" fill="none" stroke="#2b2b2b" stroke-width="1.5"/><path d="M1141.6 119.4 V126" stroke="#2b2b2b" stroke-width="1.7"/><circle cx="1141.6" cy="116.4" r="1.1" fill="#2b2b2b"/></svg>
<div class="b" style="left:1165px;top:92px;width:331px;height:32px;background:#dadada;"></div>
<div class="b" style="left:1165px;top:92px;width:77px;height:32px;background:#f0f0f0;"></div>
<div class="b" style="left:1312px;top:92px;width:1px;height:32px;background:#d3d3d3;"></div>
<div class="b" style="left:1381.5px;top:92px;width:1px;height:32px;background:#d3d3d3;"></div>
<div class="b" style="left:1450.5px;top:92px;width:1px;height:32px;background:#d3d3d3;"></div>
<div class="b" style="left:1242px;top:123px;width:254px;height:1px;background:#cccccc;"></div>
<div class="b" style="left:1497px;top:92px;width:3px;height:858px;background:#f0f0f0;"></div>
<div class="b" style="left:1495.4px;top:92px;width:1.6px;height:854px;background:#929292;"></div>
<span id="nav1" class="t" style="left:1175.6px;top:97.30px;font-size:12px;color:#262626;font-weight:700;-webkit-text-stroke:0;transform:scaleX(0.9790);">Navigator</span>
<div class="b" style="left:1252.5px;top:97.30px;width:59px;height:20px;overflow:hidden"><span id="nav2" class="t" style="left:0;top:0;font-size:12px;color:#5a5a5a;font-weight:700;-webkit-text-stroke:0;transform:scaleX(0.9855);">Histogramm</span></div>
<div class="b" style="left:1321.5px;top:97.30px;width:59px;height:20px;overflow:hidden"><span id="nav3" class="t" style="left:0;top:0;font-size:12px;color:#5a5a5a;font-weight:700;-webkit-text-stroke:0;transform:scaleX(0.9581);">Eigenschaften</span></div>
<div class="b" style="left:1390.5px;top:97.30px;width:59.4px;height:20px;overflow:hidden"><span id="nav4" class="t" style="left:0;top:0;font-size:12px;color:#5a5a5a;font-weight:700;-webkit-text-stroke:0;transform:scaleX(0.9681);">Korrekturen</span></div>
<svg class="b" style="left:0px;top:0px;pointer-events:none" width="1500" height="950" viewBox="0 0 1500 950"><rect x="1477" y="103.8" width="12" height="1.2" fill="#6a6a6a"/><rect x="1477" y="106.3" width="12" height="1.2" fill="#6a6a6a"/><rect x="1477" y="108.8" width="12" height="1.2" fill="#6a6a6a"/><rect x="1477" y="111.3" width="12" height="1.2" fill="#6a6a6a"/></svg>
<div class="b" style="left:1165px;top:407px;width:331px;height:1px;background:#d6d6d6;"></div>
<div class="b" style="left:1165px;top:408px;width:64.5px;height:28px;background:#fafafa;"></div>
<span id="nav5" class="t" style="left:1170.6px;top:413.00px;font-size:12.5px;color:#2a2a2a;transform:scaleX(0.9432);">16,67%</span>
<svg class="b" style="left:0px;top:0px;pointer-events:none" width="1500" height="950" viewBox="0 0 1500 950"><path d="M1240 425.8 L1244.4 420.4 L1246.6 423 L1248 421.6 L1252 425.8 Z" fill="#333"/><path d="M1447.4 425.8 L1455.6 415.6 L1459.6 420.6 L1461.6 418.4 L1467.4 425.8 Z" fill="#222"/><rect x="1267.3" y="417.8" width="168" height="3" rx="1.5" fill="#d2d2d2"/><path d="M1329 422.6 L1334.6 428.6 V431 Q1334.6 432.8 1332.8 432.8 H1325.2 Q1323.4 432.8 1323.4 431 V428.6 Z" fill="#fdfdfd" stroke="#a0a0a0" stroke-width="1"/></svg>
<div class="b" style="left:1165px;top:436px;width:331px;height:1px;background:#c4c4c4;"></div>
<div class="b" style="left:1165px;top:437px;width:331px;height:2px;background:#909090;"></div>
<div class="b" style="left:1165px;top:439px;width:331px;height:32px;background:#dadada;"></div>
<div class="b" style="left:1165px;top:439px;width:72px;height:32px;background:#f0f0f0;"></div>
<div class="b" style="left:1310.5px;top:439px;width:1px;height:32px;background:#d3d3d3;"></div>
<div class="b" style="left:1237px;top:470px;width:259px;height:1px;background:#cccccc;"></div>
<span id="ak1" class="t" style="left:1175.5px;top:443.70px;font-size:12px;color:#262626;font-weight:700;-webkit-text-stroke:0;transform:scaleX(0.9739);">Aktionen</span>
<span id="ak2" class="t" style="left:1248px;top:443.70px;font-size:12px;color:#5a5a5a;font-weight:700;-webkit-text-stroke:0;transform:scaleX(0.9497);">Protokoll</span>
<svg class="b" style="left:0px;top:0px;pointer-events:none" width="1500" height="950" viewBox="0 0 1500 950"><rect x="1477" y="450.2" width="12" height="1.2" fill="#6a6a6a"/><rect x="1477" y="452.7" width="12" height="1.2" fill="#6a6a6a"/><rect x="1477" y="455.2" width="12" height="1.2" fill="#6a6a6a"/><rect x="1477" y="457.7" width="12" height="1.2" fill="#6a6a6a"/></svg>
<div class="b" style="left:1165px;top:471px;width:312.6px;height:167px;background:#f0f0f0;"></div>
<div class="b" style="left:1189.5px;top:474px;width:1px;height:162px;background:#e4e4e4;"></div>
<div class="b" style="left:1477.6px;top:474px;width:16px;height:162px;background:#e7e7e7;"></div>
<div class="b" style="left:1479.4px;top:494.5px;width:12.8px;height:10.6px;background:#c6c6c6;"></div>
<span id="ac0" class="t" style="left:1266.6px;top:477.00px;font-size:12.2px;color:#2a2a2a;transform:scaleX(0.9100);">ClippingService24</span>
<span id="ac1" class="t" style="left:1258.7px;top:500.45px;font-size:12.2px;color:#2a2a2a;transform:scaleX(0.9320);">Freistellen nach TIFF</span>
<span id="ac2" class="t" style="left:1258.7px;top:523.90px;font-size:12.2px;color:#2a2a2a;transform:scaleX(0.8999);">Freistellen nach JPG</span>
<span id="ac3" class="t" style="left:1258.7px;top:547.35px;font-size:12.2px;color:#2a2a2a;transform:scaleX(0.9458);">Freistellen mit Maske auf Originalebene</span>
<span id="ac4" class="t" style="left:1258.7px;top:570.80px;font-size:12.2px;color:#2a2a2a;transform:scaleX(0.9484);">800x800px mit Pfad 1</span>
<span id="ac5" class="t" style="left:1258.7px;top:594.25px;font-size:12.2px;color:#2a2a2a;transform:scaleX(0.9427);">800x800px ohne Pfad</span>
<span id="ac6" class="t" style="left:1258.7px;top:617.70px;font-size:12.2px;color:#2a2a2a;transform:scaleX(0.9472);">800px eingepasst</span>
<div class="b" style="left:1165px;top:638px;width:331px;height:1px;background:#dcdcdc;"></div>
<svg class="b" style="left:0px;top:0px;pointer-events:none" width="1500" height="950" viewBox="0 0 1500 950"><path d="M1173.6 486.80 L1177 490.20 L1183.4 482.20" fill="none" stroke="#e0242c" stroke-width="2"/><rect x="1195.8" y="479.60" width="14" height="14" fill="#f3f3f3" stroke="#dedede" stroke-width="1"/><path d="M1221.4 484.20000000000005 l4.3 4.6 l4.3 -4.6" stroke="#666" stroke-width="1.1" fill="none"/><path d="M1240 480.20 H1246.4 L1247.8 482.40 H1255.6 V492.60 H1240 Z M1240 484.60 H1255.6" fill="none" stroke="#333" stroke-width="1.3" stroke-linejoin="round"/><path d="M1173.6 510.25 L1177 513.65 L1183.4 505.65" fill="none" stroke="#1c1c1c" stroke-width="2"/><rect x="1195.8" y="503.05" width="14" height="14" fill="#f3f3f3" stroke="#dedede" stroke-width="1"/><path d="M1241.6 504.45 L1245 510.05 L1241.6 515.65" fill="none" stroke="#555" stroke-width="1.1"/><rect x="1253" y="521.25" width="223" height="1" fill="#fafafa"/><rect x="1253" y="520.25" width="223" height="1" fill="#e6e6e6"/><path d="M1173.6 533.70 L1177 537.10 L1183.4 529.10" fill="none" stroke="#1c1c1c" stroke-width="2"/><rect x="1195.8" y="526.50" width="14" height="14" fill="#f3f3f3" stroke="#dedede" stroke-width="1"/><path d="M1241.6 527.90 L1245 533.50 L1241.6 539.10" fill="none" stroke="#555" stroke-width="1.1"/><rect x="1253" y="544.70" width="223" height="1" fill="#fafafa"/><rect x="1253" y="543.70" width="223" height="1" fill="#e6e6e6"/><path d="M1173.6 557.15 L1177 560.55 L1183.4 552.55" fill="none" stroke="#1c1c1c" stroke-width="2"/><rect x="1195.8" y="549.95" width="14" height="14" fill="#f3f3f3" stroke="#dedede" stroke-width="1"/><path d="M1241.6 551.35 L1245 556.95 L1241.6 562.55" fill="none" stroke="#555" stroke-width="1.1"/><rect x="1253" y="568.15" width="223" height="1" fill="#fafafa"/><rect x="1253" y="567.15" width="223" height="1" fill="#e6e6e6"/><path d="M1173.6 580.60 L1177 584.00 L1183.4 576.00" fill="none" stroke="#e0242c" stroke-width="2"/><rect x="1195.8" y="573.40" width="14" height="14" fill="#f3f3f3" stroke="#dedede" stroke-width="1"/><path d="M1241.6 574.80 L1245 580.40 L1241.6 586.00" fill="none" stroke="#555" stroke-width="1.1"/><rect x="1253" y="591.60" width="223" height="1" fill="#fafafa"/><rect x="1253" y="590.60" width="223" height="1" fill="#e6e6e6"/><path d="M1173.6 604.05 L1177 607.45 L1183.4 599.45" fill="none" stroke="#1c1c1c" stroke-width="2"/><rect x="1195.8" y="596.85" width="14" height="14" fill="#f3f3f3" stroke="#dedede" stroke-width="1"/><path d="M1241.6 598.25 L1245 603.85 L1241.6 609.45" fill="none" stroke="#555" stroke-width="1.1"/><rect x="1253" y="615.05" width="223" height="1" fill="#fafafa"/><rect x="1253" y="614.05" width="223" height="1" fill="#e6e6e6"/><path d="M1173.6 627.50 L1177 630.90 L1183.4 622.90" fill="none" stroke="#1c1c1c" stroke-width="2"/><rect x="1195.8" y="620.30" width="14" height="14" fill="#f3f3f3" stroke="#dedede" stroke-width="1"/><path d="M1241.6 621.70 L1245 627.30 L1241.6 632.90" fill="none" stroke="#555" stroke-width="1.1"/><rect x="1253" y="638.50" width="223" height="1" fill="#fafafa"/><rect x="1253" y="637.50" width="223" height="1" fill="#e6e6e6"/><path d="M1481.4 488.6 l4.0 -4 l4.0 4" stroke="#b0b0b0" stroke-width="1.1" fill="none"/><path d="M1481.4 624.6 l4.0 4 l4.0 -4" stroke="#b0b0b0" stroke-width="1.1" fill="none"/><rect x="1280.3" y="649" width="7.4" height="7.4" fill="#9a9a9a"/><circle cx="1317.2" cy="652.7" r="5.4" fill="#9a9a9a"/><path d="M1347.6 647.6 L1357.8 652.7 L1347.6 657.8 Z" fill="#9a9a9a"/><path d="M1378.2 647 H1383.4 L1384.8 648.8 H1391.6 V658.6 H1378.2 Z" fill="#e2e2e2" stroke="#2b2b2b" stroke-width="1.4" stroke-linejoin="round"/><path d="M1416.4 646.8 H1427.2 V658.4 H1420.6 L1416.4 654.2 Z" fill="none" stroke="#2b2b2b" stroke-width="1.4" stroke-linejoin="round"/><path d="M1416.4 654.2 H1420.6 V658.4 Z" fill="#2b2b2b"/><path d="M1450.8 648.4 H1462.3999999999999 M1454.6 648.2 V646.6 H1458.6 V648.2" fill="none" stroke="#9a9a9a" stroke-width="1.2"/><path d="M1452.0 650 H1461.2 V658.4 H1452.0 Z" fill="none" stroke="#9a9a9a" stroke-width="1.2"/><path d="M1454.3999999999999 651.4 V657 M1456.6 651.4 V657 M1458.8 651.4 V657" stroke="#9a9a9a" stroke-width="1"/></svg>
<div class="b" style="left:1165px;top:665px;width:331px;height:1px;background:#c4c4c4;"></div>
<div class="b" style="left:1165px;top:666px;width:331px;height:2px;background:#909090;"></div>
<div class="b" style="left:1165px;top:668px;width:331px;height:32px;background:#dadada;"></div>
<div class="b" style="left:1165px;top:668px;width:61.5px;height:32px;background:#f0f0f0;"></div>
<div class="b" style="left:1286.4px;top:668px;width:1px;height:32px;background:#d3d3d3;"></div>
<div class="b" style="left:1341.6px;top:668px;width:1px;height:32px;background:#d3d3d3;"></div>
<div class="b" style="left:1226.5px;top:699px;width:269.5px;height:1px;background:#cccccc;"></div>
<span id="ly1" class="t" style="left:1175.3px;top:673.00px;font-size:12px;color:#262626;font-weight:700;-webkit-text-stroke:0;transform:scaleX(0.9160);">Ebenen</span>
<span id="ly2" class="t" style="left:1236.4px;top:673.00px;font-size:12px;color:#5a5a5a;font-weight:700;-webkit-text-stroke:0;transform:scaleX(0.9299);">Kanäle</span>
<span id="ly3" class="t" style="left:1297px;top:673.00px;font-size:12px;color:#5a5a5a;font-weight:700;-webkit-text-stroke:0;transform:scaleX(0.9545);">Pfade</span>
<svg class="b" style="left:0px;top:0px;pointer-events:none" width="1500" height="950" viewBox="0 0 1500 950"><rect x="1477" y="680.2" width="12" height="1.2" fill="#6a6a6a"/><rect x="1477" y="682.7" width="12" height="1.2" fill="#6a6a6a"/><rect x="1477" y="685.2" width="12" height="1.2" fill="#6a6a6a"/><rect x="1477" y="687.7" width="12" height="1.2" fill="#6a6a6a"/></svg>
<div class="b" style="left:1170.7px;top:712.5px;width:100.5px;height:18.5px;background:#fafafa;border-radius:2px"></div>
<span id="ly4" class="t" style="left:1195px;top:711.80px;font-size:12px;color:#a9a9a9;transform:scaleX(0.9450);">Art</span>
<div class="b" style="left:1165px;top:737.5px;width:331px;height:1px;background:#dedede;"></div>
<div class="b" style="left:1169.8px;top:745.4px;width:171.6px;height:18.6px;background:#f6f6f6;border:1px solid #e6e6e6;border-radius:2px"></div>
<span id="ly5" class="t" style="left:1179px;top:744.60px;font-size:12px;color:#a9a9a9;transform:scaleX(0.9620);">Normal</span>
<span id="ly6" class="t" style="left:1350.5px;top:744.60px;font-size:12px;color:#a9a9a9;transform:scaleX(0.9904);">Deckkraft:</span>
<div class="b" style="left:1410px;top:745.1999999999999px;width:43.5px;height:18.4px;background:#fafafa;border:1px solid #e4e4e4"></div>
<div class="b" style="left:1453.5px;top:745.1999999999999px;width:17px;height:18.4px;background:#f4f4f4;border:1px solid #e4e4e4;border-left:none"></div>
<span id="ly7" class="t" style="left:1414px;top:744.60px;font-size:12.2px;color:#3a3a3a;transform:scaleX(0.9495);">100%</span>
<div class="b" style="left:1165px;top:770px;width:331px;height:1px;background:#dedede;"></div>
<span id="ly8" class="t" style="left:1171.4px;top:776.20px;font-size:12px;color:#a9a9a9;transform:scaleX(0.9257);">Fixieren:</span>
<span id="ly9" class="t" style="left:1367.6px;top:776.20px;font-size:12px;color:#a9a9a9;transform:scaleX(0.9248);">Fläche:</span>
<div class="b" style="left:1410px;top:777.1999999999999px;width:43.5px;height:18.4px;background:#fafafa;border:1px solid #e4e4e4"></div>
<div class="b" style="left:1453.5px;top:777.1999999999999px;width:17px;height:18.4px;background:#f4f4f4;border:1px solid #e4e4e4;border-left:none"></div>
<span id="ly10" class="t" style="left:1414px;top:776.60px;font-size:12.2px;color:#3a3a3a;transform:scaleX(0.9495);">100%</span>
<div class="b" style="left:1165px;top:800px;width:331px;height:116px;background:#f0f0f0;"></div>
<div class="b" style="left:1476.5px;top:806px;width:19.5px;height:110px;background:#e6e6e6;"></div>
<div class="b" style="left:1199.7px;top:806px;width:276.8px;height:102.8px;background:#b6b6b6;"></div>
<div class="b" style="left:1165px;top:908.8px;width:311.5px;height:1px;background:#dcdcdc;"></div>
<span id="ly11" class="t" style="left:1278.8px;top:847.00px;font-size:12.2px;color:#2a2a2a;font-style:italic;transform:scaleX(0.9343);">Hintergrund</span>
<div class="b" style="left:1165px;top:916px;width:331px;height:1px;background:#dcdcdc;"></div>
<svg class="b" style="left:0px;top:0px;pointer-events:none" width="1500" height="950" viewBox="0 0 1500 950"><circle cx="1183.6" cy="720.4" r="3.7" fill="none" stroke="#8a8a8a" stroke-width="1.3"/><path d="M1186.4 723.2 L1189.8 726.6" stroke="#8a8a8a" stroke-width="1.5"/><path d="M1261.4 720.8 l3.2 3.2 l3.2 -3.2" stroke="#c4c4c4" stroke-width="1" fill="none"/><rect x="1304" y="716.2" width="13.4" height="10.4" fill="none" stroke="#8a8a8a" stroke-width="1.2"/><path d="M1306 724.6 L1309.4 720.2 L1311.6 722.8 L1313 721.4 L1315.6 724.6 Z" fill="#8a8a8a"/><circle cx="1313.6" cy="719" r="0.9" fill="#8a8a8a"/><circle cx="1338.3" cy="721.2" r="5.6" fill="none" stroke="#8a8a8a" stroke-width="1.2"/><path d="M1342.3 717.2 A5.6 5.6 0 0 1 1334.3 725.2 Z" fill="#8a8a8a"/><path d="M1361.4 719.4 V716 H1372 V719.4 M1366.7 716 V726.4 M1364 726.4 H1369.4" fill="none" stroke="#8a8a8a" stroke-width="1.5"/><rect x="1389.6" y="716.2" width="10.8" height="10" fill="none" stroke="#8a8a8a" stroke-width="1.2"/><rect x="1388.0" y="714.6" width="3.2" height="3.2" fill="#f0f0f0" stroke="#8a8a8a" stroke-width="1"/><rect x="1398.8000000000002" y="714.6" width="3.2" height="3.2" fill="#f0f0f0" stroke="#8a8a8a" stroke-width="1"/><rect x="1388.0" y="724.6" width="3.2" height="3.2" fill="#f0f0f0" stroke="#8a8a8a" stroke-width="1"/><rect x="1398.8000000000002" y="724.6" width="3.2" height="3.2" fill="#f0f0f0" stroke="#8a8a8a" stroke-width="1"/><path d="M1421.4 715.6 H1426.4 L1429 718.2 V724 H1426" fill="none" stroke="#8a8a8a" stroke-width="1.2"/><rect x="1417.6" y="719.6" width="7.6" height="7.4" fill="#f0f0f0" stroke="#8a8a8a" stroke-width="1.2"/><path d="M1421.4 718.4 V715.6" stroke="#8a8a8a" stroke-width="1.2"/><circle cx="1467.4" cy="716.4" r="4" fill="#9d9d9d"/><path d="M1330 754.2 l3.3 3.2 l3.3 -3.2" stroke="#c4c4c4" stroke-width="1" fill="none"/><path d="M1458.6 753.8 l3.2 3.2 l3.2 -3.2" stroke="#c4c4c4" stroke-width="1" fill="none"/><rect x="1228.2" y="780" width="12.6" height="12.6" fill="#f6f6f6" stroke="#8a8a8a" stroke-width="1.1"/><path d="M1228.2 780 h4.2 v4.2 h-4.2 Z M1236.6 780 h4.2 v4.2 h-4.2 Z M1232.4 784.2 h4.2 v4.2 h-4.2 Z M1228.2 788.4 h4.2 v4.2 h-4.2 Z M1236.6 788.4 h4.2 v4.2 h-4.2 Z" fill="#a8a8a8"/><path d="M1267.6 778.6 L1261.6 787" stroke="#777" stroke-width="2" stroke-linecap="round"/><path d="M1260.6 786 C1257.8 786 1258 789.6 1255.6 792.4 C1259.4 793 1262.8 791.4 1262.6 788 Z" fill="#777"/><g transform="translate(1285.2 786.2)"><path d="M-6.5 0 H6.5 M0 -6.5 V6.5" stroke="#777" stroke-width="1.2" fill="none"/><path d="M0 -7.5 L2.85 -4.050000000000001 H-2.85 Z M0 7.5 L2.85 4.050000000000001 H-2.85 Z M-7.5 0 L-4.050000000000001 -2.85 V2.85 Z M7.5 0 L4.050000000000001 -2.85 V2.85 Z" fill="#777"/></g><path d="M1306.6 779 V791.4 H1317.6 M1303.6 782.2 H1315.4 V794" fill="none" stroke="#777" stroke-width="1.2"/><path d="M1309 779.6 H1319 M1319 783.4 V790" stroke="#777" stroke-width="1" stroke-dasharray="1.6 1.4"/><rect x="1331.4" y="785" width="11.4" height="8.6" rx="1" fill="#777"/><path d="M1333.6 785 V782.6 A3.5 3.5 0 0 1 1340.6 782.6 V785" fill="none" stroke="#777" stroke-width="1.5"/><circle cx="1337.1" cy="789" r="1.1" fill="#f0f0f0"/><path d="M1458.6 785.8 l3.2 3.2 l3.2 -3.2" stroke="#c4c4c4" stroke-width="1" fill="none"/><path d="M1175.4 857.8 Q1182.7 850.4 1190 857.8 Q1182.7 865.2 1175.4 857.8 Z" fill="#1a1a1a"/><circle cx="1182.7" cy="857.6" r="3.3" fill="#f0f0f0"/><circle cx="1182.7" cy="857.6" r="1.9" fill="#1a1a1a"/><rect x="1447.6" y="855.4" width="10.4" height="8" rx="0.8" fill="none" stroke="#2a2a2a" stroke-width="1.3"/><path d="M1449.8 855.2 V853.4 A3 3 0 0 1 1455.8 853.4 V855.2" fill="none" stroke="#2a2a2a" stroke-width="1.3"/><rect x="1451.8" y="858.4" width="2" height="2" fill="#2a2a2a"/><path d="M1265 927.6 H1262.6 A3.3 3.3 0 0 0 1262.6 934.2 H1265 M1268 927.6 H1270.4 A3.3 3.3 0 0 1 1270.4 934.2 H1268 M1263.4 930.9 H1269.6" fill="none" stroke="#9a9a9a" stroke-width="1.4"/><path d="M1306 938 l1.7 1.8 l1.7 -1.8 Z" fill="#9a9a9a"/><rect x="1322.6" y="925" width="14.2" height="11.4" rx="0.8" fill="#222"/><circle cx="1329.7" cy="930.7" r="3.4" fill="#f4f4f4"/><circle cx="1361" cy="930.6" r="5.6" fill="#f0f0f0" stroke="#222" stroke-width="1.3"/><path d="M1365 926.6 A5.6 5.6 0 0 1 1357 934.6 Z" fill="#222"/><path d="M1366.2 938 l2 2 l2 -2 Z" fill="#222"/><path d="M1386.2 925.2 H1391 L1392.4 927 H1399 V936.4 H1386.2 Z" fill="#e0e0e0" stroke="#333" stroke-width="1.3" stroke-linejoin="round"/><path d="M1419 925 H1430.2 V936.2 H1423.2 L1419 932 Z" fill="none" stroke="#222" stroke-width="1.3" stroke-linejoin="round"/><path d="M1419 932 H1423.2 V936.2 Z" fill="#222"/><path d="M1450 926.6 H1461.6 M1453.8 926.4000000000001 V924.8000000000001 H1457.8 V926.4000000000001" fill="none" stroke="#a0a0a0" stroke-width="1.2"/><path d="M1451.2 928.2 H1460.4 V936.6 H1451.2 Z" fill="none" stroke="#a0a0a0" stroke-width="1.2"/><path d="M1453.6 929.6 V935.2 M1455.8 929.6 V935.2 M1458 929.6 V935.2" stroke="#a0a0a0" stroke-width="1"/></svg>
<span id="ly12" class="t" style="left:1292.6px;top:920.20px;font-size:15px;color:#9a9a9a;font-style:italic;transform:scaleX(1.1138);">fx</span>
<div class="b" style="left:1165px;top:945px;width:331px;height:1.4px;background:#9a9a9a;"></div>
<div class="b" style="left:1116.6px;top:945px;width:48px;height:1px;background:#cfcfcf;"></div>
<svg class="b" style="left:0px;top:0px;pointer-events:none" width="1500" height="950" viewBox="0 0 1500 950"><symbol id="photo" viewBox="346 174 473 710" preserveAspectRatio="none"><defs>
<linearGradient id="pbg" x1="0" y1="0" x2="0" y2="1"><stop offset="0" stop-color="#c8bcc4"/><stop offset="0.26" stop-color="#d4c8d2"/><stop offset="0.43" stop-color="#d6cbd5"/><stop offset="0.55" stop-color="#dcd1dc"/><stop offset="0.63" stop-color="#e2d8e2"/><stop offset="0.75" stop-color="#e5dae4"/><stop offset="1" stop-color="#e5d9e2"/></linearGradient>
<radialGradient id="pvg" gradientUnits="userSpaceOnUse" cx="346" cy="174" r="210"><stop offset="0" stop-color="#a8949e" stop-opacity="0.24"/><stop offset="1" stop-color="#a8949e" stop-opacity="0"/></radialGradient><radialGradient id="pvg2" gradientUnits="userSpaceOnUse" cx="819" cy="174" r="190"><stop offset="0" stop-color="#a8949e" stop-opacity="0.16"/><stop offset="1" stop-color="#a8949e" stop-opacity="0"/></radialGradient><linearGradient id="pvg3" x1="0" x2="1" y1="0" y2="0"><stop offset="0" stop-color="#b0a2ac" stop-opacity="0.14"/><stop offset="0.25" stop-color="#b0a2ac" stop-opacity="0"/><stop offset="0.8" stop-color="#b0a2ac" stop-opacity="0"/><stop offset="1" stop-color="#b0a2ac" stop-opacity="0.06"/></linearGradient>
<linearGradient id="mvg" x1="0" y1="0" x2="0" y2="1"><stop offset="0.35" stop-color="#fff"/><stop offset="0.7" stop-color="#000"/></linearGradient><mask id="mv" maskUnits="userSpaceOnUse" x="346" y="174" width="473" height="710"><rect x="346" y="174" width="473" height="710" fill="url(#mvg)"/></mask>
<filter id="b2" x="-20%" y="-20%" width="140%" height="140%"><feGaussianBlur stdDeviation="2"/></filter>
<filter id="b1" x="-20%" y="-20%" width="140%" height="140%"><feGaussianBlur stdDeviation="0.9"/></filter>
<filter id="b4" x="-30%" y="-30%" width="160%" height="160%"><feGaussianBlur stdDeviation="4.5"/></filter>
<filter id="b8" x="-30%" y="-30%" width="160%" height="160%"><feGaussianBlur stdDeviation="9"/></filter>
<linearGradient id="strapF" x1="0.2" y1="0" x2="0.5" y2="1"><stop offset="0" stop-color="#4b495d"/><stop offset="0.45" stop-color="#343548"/><stop offset="1" stop-color="#1b1d2c"/></linearGradient>
<linearGradient id="strapB" x1="0.1" y1="0" x2="0.6" y2="1"><stop offset="0" stop-color="#3d3c50"/><stop offset="0.5" stop-color="#2a2b3d"/><stop offset="1" stop-color="#1a1c2a"/></linearGradient>
<clipPath id="cF"><path d="M505.5 672.2 L511 661 L519.5 650 L528.5 642.5 L538.6 636.8 L559.2 625.8 L578.4 619.9 L584.3 620.6 L593.1 631.7 L602 647.1 L615.2 661.9 L630 673.7 L638.6 678.2 L622.6 679.5 L604.9 684.7 L584.3 695.8 L566.6 710.5 L556 724.6 L534.2 713.4 L513.6 701.6 L501.8 694.3 L501.8 682.5 Z"/></clipPath>
<clipPath id="cB"><path d="M606.7 615.8 L616.7 605 L630 598.3 L641.7 597.5 L651.7 600.8 L668.3 611.7 L685 624.2 L701.7 635 L709.2 639.2 L698.3 643.3 L685 650 L673.3 660 L665 670 L659.2 678.3 L640 678 L620 663.3 L604 640 Z"/></clipPath>
</defs><rect x="346" y="174" width="473" height="710" fill="url(#pbg)"/><rect x="346" y="174" width="473" height="710" fill="url(#pvg)"/><rect x="346" y="174" width="473" height="710" fill="url(#pvg2)"/><rect x="346" y="174" width="473" height="710" fill="url(#pvg3)" mask="url(#mv)"/><ellipse cx="570" cy="712" rx="128" ry="26" fill="#a396a8" opacity="0.45" filter="url(#b8)" transform="rotate(20 570 712)"/><ellipse cx="700" cy="682" rx="48" ry="24" fill="#a396a8" opacity="0.4" filter="url(#b8)"/><path d="M449 655 L455 676 L506 712 L550 736 L598 748 L650 743 L676 722 L700 709 L730 696 L738 680 L700 700 L600 735 L500 690 Z" fill="#6d6278" opacity="0.55" filter="url(#b4)"/><path d="M526.7 621.7 L528.3 617.5 L535 612.5 L548.3 609.2 L565 608.3 L581.7 609.7 L596.7 612.5 L606.7 615.8 L640 600 L709.2 639.2 L720 650 L728.3 661.7 L733.3 673.3 L734.2 681.7 L731.7 690 L723.3 697.5 L710 702.5 L693.3 705 L676.7 704.2 L660 700 L600 660 L540 640 L527 632 Z" fill="#181a26"/><path d="M529 619 L536 613.6 L549 610.4 L565 609.6 L581 611 L596 613.8 L605 617 L598 630 L570 627 L545 628 L531 626 Z" fill="#262a3d" filter="url(#b1)"/><path d="M659.2 678.3 L665 670 L673.3 660 L685 650 L698.3 643.3 L709.2 639.6 L719 650 L727 662 L731.6 673.6 L731 680 L722 687 L706 691.6 L688 692.4 L672 689.4 Z" fill="#1b1e2c"/><path d="M672 664 L690 650 L708 643 L722 660 L728 676 L716 684 L694 687 L676 682 Z" fill="#25293a" opacity="0.8" filter="url(#b2)"/><path d="M662 690 Q690 700 722 690 Q730 686 732 680" fill="none" stroke="#2a2e42" stroke-width="1.6" opacity="0.8" filter="url(#b1)"/><g clip-path="url(#cB)"><rect x="590" y="590" width="130" height="100" fill="url(#strapB)"/><path d="M606 617 L617 604 L631 598 L642 597 L650 600 L634 606 L622 618 L612 634 L604 632 Z" fill="#2c4c64"/><path d="M641 597 L652 600 L668 612 L650 607 Z" fill="#2a3f58"/><path d="M612 634 L622 622 L640 612 L660 606 L672 616 L650 624 L634 634 L622 648 Z" fill="#262839" filter="url(#b1)"/><path d="M627 650 L637 645 L641 654 L632 660 Z" fill="#26485f"/><path d="M655 612 L668 611 L700 634 L709 640 L690 640 L672 628 Z" fill="#33344a" filter="url(#b1)"/><path d="M661 668 L674 656 L690 646 L709 640 L698 646 L684 654 L672 666 L664 676 Z" fill="#161824" opacity="0.9"/><path d="M604 640 L620 663 L640 678 L659 678 L650 660 L630 650 L615 640 Z" fill="#131520" opacity="0.85" filter="url(#b1)"/></g><path d="M709 639.4 L698.3 643.6 L685 650.4 L673.3 660.4 L665 670.4 L659.4 678.6" fill="none" stroke="#3c4258" stroke-width="1.1" opacity="0.9"/><path d="M450.8 650 L452.5 643.3 L458.3 637.5 L470 633.3 L485 631.3 L501.7 632 L515 634.2 L528.3 638 L566 621 L590 622 L640 678 L650 686.7 L661.7 695 L670 703.3 L672.5 708.3 L673.3 715 L670.8 722.5 L661.7 730.8 L645 738.3 L623.3 742.5 L598.3 743 L573.3 739.2 L550 731.7 L530 721.7 L506.7 706.7 L481.7 690 L465 678.3 L454.2 670 L451.3 661.7 Z" fill="#171925"/><path d="M453.6 645 L459 639 L470.4 634.8 L485 632.8 L501.4 633.4 L514.6 635.6 L526.6 639.2 L513 655.4 L504.4 669.6 L490 664 L470 655 L456 650 Z" fill="#23273a"/><path d="M462 642 L480 636 L504 636 L520 640 L508 656 L488 656 L468 650 Z" fill="#2b3045" opacity="0.85" filter="url(#b2)"/><path d="M452 652 Q470 660 503 672" fill="none" stroke="#2a2e41" stroke-width="1.2" opacity="0.7" filter="url(#b1)"/><path d="M556.7 723.6 L563.3 710 L578.3 696.7 L598.3 685 L620 678.3 L640 677.8 L650 686.7 L661.7 695 L669 703 L670.6 709 L668 716 L657 723.6 L640 729.6 L618 732.6 L594 732 L572 728.6 Z" fill="#191c2a"/><path d="M580 706 L602 692 L628 686 L646 690 L660 702 L662 712 L646 722 L618 726 L592 722 Z" fill="#23273a" opacity="0.8" filter="url(#b2)"/><path d="M557 724 Q600 738 648 728 Q668 722 671 708" fill="none" stroke="#2b3045" stroke-width="1.5" opacity="0.85" filter="url(#b1)"/><g clip-path="url(#cF)"><rect x="495" y="612" width="150" height="118" fill="url(#strapF)"/><path d="M560 626 L584 620 L602 647 L630 674 L600 680 L585.8 652.3 L565 647 Z" fill="#504c5f" opacity="0.7" filter="url(#b2)"/><path d="M501.8 682.5 L532.7 676.6 L538.6 694.3 L548.9 712 L556 725 L501.8 694.3 Z" fill="#191b28" filter="url(#b1)"/><path d="M534.2 647.1 L556.3 642.7 L560.7 664.8 L545.2 673.7 L532.7 676.6 L538.6 694.3 L526.8 688.4 L516.5 670.7 Z" fill="#222436" filter="url(#b1)"/><path d="M532.7 676.6 L545.2 678.1 L574 682.5 L585.8 652.3 L598 660 L590 688 L566 700 L548 704 L538.6 694.3 Z" fill="#2f3043" opacity="0.85" filter="url(#b1)"/><path d="M559.2 625.8 L578.4 619.9 L584.3 620.6 L593.1 631.7 L597.5 639.8 L590.2 633.9 L581.3 626.5 L572.5 628.7 L562.2 631.7 Z" fill="#38566f"/><path d="M568.1 624.3 L581.3 622.1 L590.2 633.1 L578.4 627.3 L569.5 629.5 Z" fill="#54738a" opacity="0.85"/><path d="M509.9 665.6 L519.5 650 L537.1 638.6 L534.2 647.1 L522.4 658.9 Z" fill="#2d4d67"/><path d="M519.5 652 L534 641 L532 647 L522.6 656 Z" fill="#47677f" opacity="0.7"/><path d="M556.3 642.7 L563.7 644.2 L565.1 647.1 L585.8 652.3 L574 682.5 L545.2 678.1 L545.2 673.7 L560.7 664.8 Z" fill="#626c82"/><path d="M563 650 L582 655 L572.4 679.6 L549 676 L563.4 667 Z" fill="#7a8498" opacity="0.7" filter="url(#b1)"/><path d="M565.1 647.1 L585.8 652.3 L584.4 655.6 L565.6 650.6 Z" fill="#4a5369" opacity="0.85"/><path d="M596 682.5 L602 666.3 L630 674.4 L638.6 678.2 L622.6 679.5 L604.9 684.7 L592 690 Z" fill="#274560"/><path d="M553.3 700.2 L572.5 694.3 L584 696 L566.6 710.5 L556 725 L548.9 712 Z" fill="#223f58"/></g><path d="M556.2 724.4 L566.8 710.7 L584.5 696 L605 684.9 L622.7 679.8 L638.6 678.4" fill="none" stroke="#3d4560" stroke-width="1.2" opacity="0.9"/><path d="M558.5 723 L568 712 L585.6 698 L605.6 687.4 L623 682.2 L637 681 L624 689 L602 699 L582 713 L567 725 Z" fill="#10121b" opacity="0.75" filter="url(#b1)"/><text transform="translate(502.6 665.6) rotate(-75) scale(0.72 1)" font-family="'Liberation Sans',sans-serif" font-weight="700" font-size="26" fill="#b7bac4">8</text></symbol><rect x="347" y="176" width="474" height="711" fill="#6e6e6e" opacity="0.55" filter="url(#b1)"/><use href="#photo" x="346" y="174" width="473" height="710"/><rect x="1237.5" y="131.5" width="180" height="270.5" fill="#e8343c"/><use href="#photo" x="1239" y="133" width="177" height="267.5"/><rect x="1204" y="810" width="64" height="94" fill="#333"/><use href="#photo" x="1205" y="811" width="62" height="92"/></svg>
</div></body></html>
